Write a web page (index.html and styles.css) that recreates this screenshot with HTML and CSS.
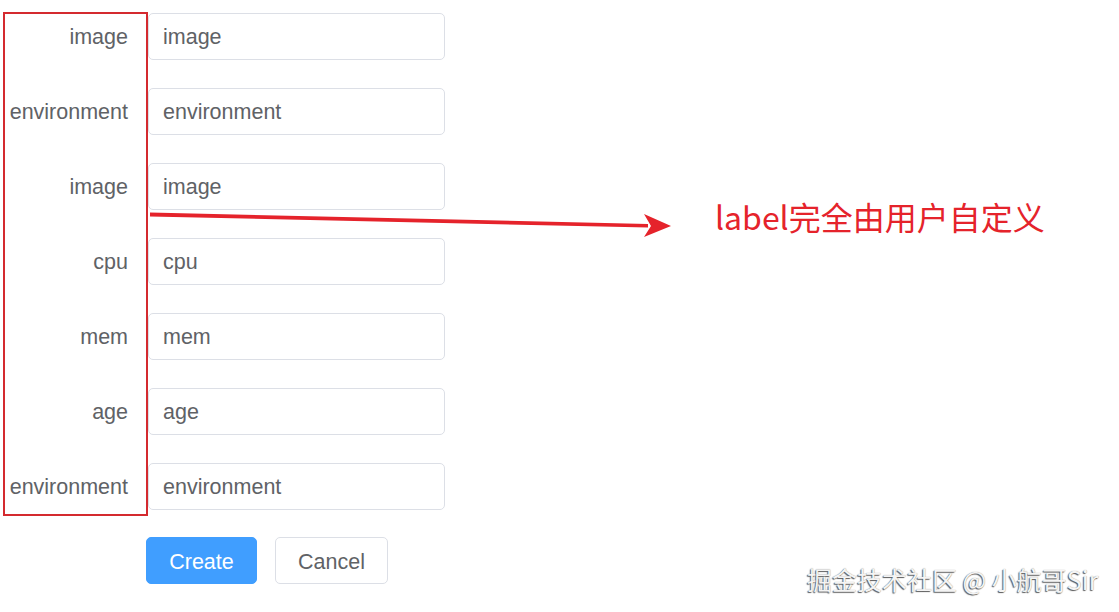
FILE: index.html
```html
<!DOCTYPE html>
<html>
<head>
<meta charset="utf-8">
<link rel="stylesheet" href="styles.css">
</head>
<body>
<div class="page">
  <form class="form">
    <label class="label">image</label><div class="input">image</div>
    <label class="label">environment</label><div class="input">environment</div>
    <label class="label">image</label><div class="input">image</div>
    <label class="label">cpu</label><div class="input">cpu</div>
    <label class="label">mem</label><div class="input">mem</div>
    <label class="label">age</label><div class="input">age</div>
    <label class="label">environment</label><div class="input">environment</div>
    <div class="actions">
      <button type="button" class="btn btn-primary">Create</button>
      <button type="button" class="btn btn-default">Cancel</button>
    </div>
  </form>

  <div class="anno-box"></div>
  <svg class="anno-arrow" width="1119" height="612" viewBox="0 0 1119 612">
    <path d="M150 212.5 L648 224 L648 227.5 L150 216.5 Z" fill="#e5232b"/>
    <polygon points="644,214 671,226 644,237 651,226" fill="#e5232b"/>
  </svg>
  <div class="anno-text">label完全由用户自定义</div>
  <div class="watermark">掘金技术社区 @ 小航哥Sir</div>
</div>
</body>
</html>
```

FILE: styles.css
```css
html, body {
  margin: 0;
  padding: 0;
  background: #ffffff;
}

.page {
  position: relative;
  width: 1119px;
  height: 612px;
  overflow: hidden;
  font-family: "Liberation Sans", Arial, sans-serif;
}

.form {
  display: grid;
  grid-template-columns: 148px 297px;
  row-gap: 28px;
  padding-top: 13px;
  margin: 0;
}

.label {
  box-sizing: border-box;
  height: 47px;
  line-height: 48px;
  padding-right: 20px;
  text-align: right;
  font-size: 21.5px;
  color: #606266;
  white-space: nowrap;
}

.input {
  box-sizing: border-box;
  height: 47px;
  line-height: 47px;
  padding-left: 14px;
  border: 1px solid #dcdfe6;
  border-radius: 5px;
  font-size: 21.5px;
  color: #606266;
  background: #fff;
}

.actions {
  grid-column: 2;
  display: flex;
  gap: 18px;
  margin-left: -2px;
  margin-top: -1px;
}

.btn {
  box-sizing: border-box;
  height: 47px;
  border-radius: 5px;
  font-family: "Liberation Sans", Arial, sans-serif;
  font-size: 21.5px;
  padding: 4px 0 0;
  cursor: pointer;
}

.btn-primary {
  width: 111px;
  background: #409eff;
  border: 1px solid #409eff;
  color: #ffffff;
}

.btn-default {
  width: 113px;
  background: #ffffff;
  border: 1px solid #dcdfe6;
  color: #606266;
}

.anno-box {
  position: absolute;
  left: 3px;
  top: 12px;
  width: 145px;
  height: 504px;
  box-sizing: border-box;
  border: 2px solid #d42a2f;
}

.anno-arrow {
  position: absolute;
  left: 0;
  top: 0;
}

.anno-text {
  position: absolute;
  left: 715px;
  top: 195px;
  font-family: "Noto Sans CJK SC", "Noto Sans", sans-serif;
  font-size: 32px;
  line-height: 42px;
  color: #e5232b;
  white-space: nowrap;
}

.watermark {
  position: absolute;
  left: 807px;
  top: 562px;
  font-family: "Noto Sans CJK SC", "Noto Sans", sans-serif;
  font-size: 25px;
  line-height: 34px;
  color: #f4f4f4;
  white-space: nowrap;
  text-shadow: -1px 1px 1px #5a5a5a, 0 0 1px #8a8a8a;
}
```
